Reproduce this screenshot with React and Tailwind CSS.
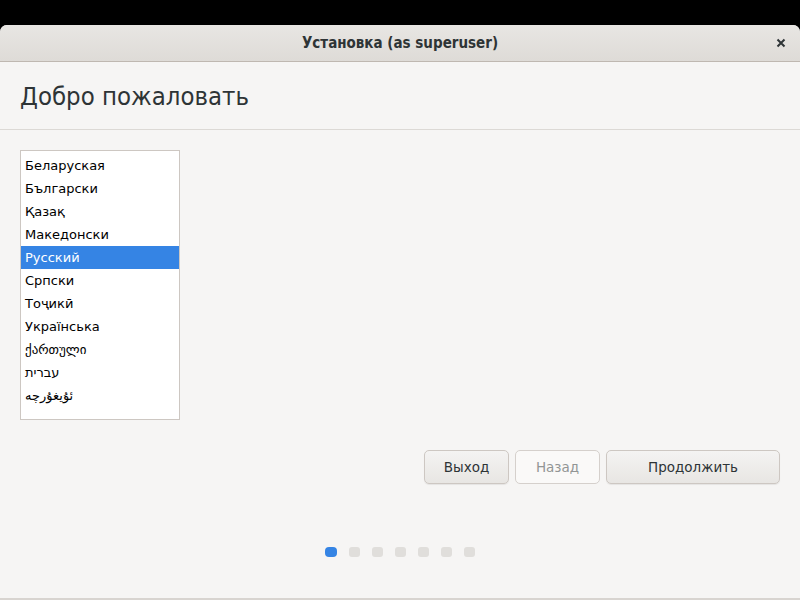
import React from "react";

const langs = [
  "Беларуская",
  "Български",
  "Қазақ",
  "Македонски",
  "Русский",
  "Српски",
  "Тоҷикӣ",
  "Українська",
  "ქართული",
  "עברית",
  "ئۇيغۇرچە",
];

export default function App() {
  return (
    <div className="w-[800px] h-[600px] bg-black flex flex-col pt-[25px] overflow-hidden" style={{ fontFamily: '"DejaVu Sans", "Noto Sans", sans-serif' }}>
      <div className="flex-1 flex flex-col rounded-t-[7px] overflow-hidden bg-[#f6f5f4]">
        <div className="h-[37px] flex items-center justify-center relative bg-gradient-to-b from-[#e8e6e3] to-[#dedbd7] border-b border-[#bfb8b1]">
          <span className="text-[15px] font-bold text-[#2e3436]" style={{ fontFamily: '"DejaVu Sans Condensed", "DejaVu Sans", sans-serif' }}>
            Установка (as superuser)
          </span>
          <span className="absolute right-[12px] top-[11px] text-[#2e3436]">
            <svg width="14" height="14" viewBox="0 0 14 14">
              <path d="M3.5 3.5 L10.5 10.5 M10.5 3.5 L3.5 10.5" stroke="#2e3436" strokeWidth="2" strokeLinecap="butt" />
            </svg>
          </span>
        </div>
        <div className="h-[68px] flex items-center px-[20px] border-b border-[#dcd9d5]">
          <span className="text-[25.5px] text-[#2e3436] pt-[2px]" style={{ fontFamily: '"DejaVu Sans Condensed", "DejaVu Sans", sans-serif' }}>
            Добро пожаловать
          </span>
        </div>
        <div className="flex-1 flex flex-col px-[20px] pt-[20px]">
          <div className="w-[160px] h-[270px] bg-white border border-[#cdc7c2] pt-[3px]">
            {langs.map((l) => (
              <div
                key={l}
                className={
                  "h-[23px] flex items-center px-[4px] text-[13px] " +
                  (l === "Русский" ? "bg-[#3584e4] text-white" : "text-[#000000]")
                }
              >
                {l}
              </div>
            ))}
          </div>
          <div className="flex justify-end gap-[6px] mt-[30px]">
            <button className="w-[85px] h-[34px] rounded-[5px] border border-[#cdc7c2] bg-gradient-to-b from-[#f4f3f2] to-[#e8e6e3] text-[13.5px] text-[#2e3436] shadow-[0_1px_1px_rgba(0,0,0,0.07)]">
              Выход
            </button>
            <button className="w-[85px] h-[34px] rounded-[5px] border border-[#d5d0cc] bg-[#faf9f8] text-[13.5px] text-[#929595]">
              Назад
            </button>
            <button className="w-[174px] h-[34px] rounded-[5px] border border-[#cdc7c2] bg-gradient-to-b from-[#f4f3f2] to-[#e8e6e3] text-[13.5px] text-[#2e3436] shadow-[0_1px_1px_rgba(0,0,0,0.07)]">
              Продолжить
            </button>
          </div>
          <div className="flex justify-center items-center gap-[12px] mt-[63px]">
            <div className="w-[12px] h-[10px] rounded-[4px] bg-[#3584e4]" />
            {[0, 1, 2, 3, 4, 5].map((i) => (
              <div key={i} className="w-[11px] h-[10px] rounded-[3px] bg-[#e0dedb]" />
            ))}
          </div>
          <div className="flex-1" />
        </div>
        <div className="h-[2px] bg-[#d8d4d0]" />
      </div>
    </div>
  );
}
